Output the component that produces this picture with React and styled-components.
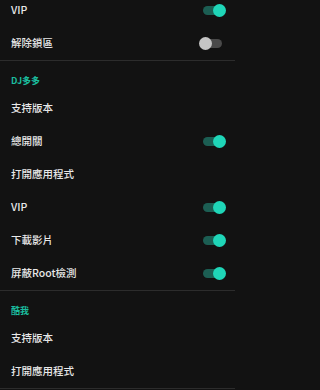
import React from 'react';
import styled, { createGlobalStyle } from 'styled-components';

const GlobalStyle = createGlobalStyle`
  html, body {
    margin: 0;
    padding: 0;
    background: #121212;
  }
  body {
    font-family: "Noto Sans CJK TC", "Noto Sans", sans-serif;
    overflow: hidden;
  }
`;

const Page = styled.div`
  width: 235px;
  height: 390px;
  background: #121212;
  overflow: hidden;
`;

const List = styled.div`
  margin-top: -6px;
  display: flex;
  flex-direction: column;
`;

const Row = styled.div`
  height: 33px;
  display: flex;
  align-items: center;
  justify-content: space-between;
  padding: 0 13px 0 11px;
  box-sizing: border-box;
`;

const Label = styled.span`
  color: #e8e8e8;
  font-size: 10.5px;
  font-weight: 500;
  line-height: 1;
`;

const Divider = styled.div`
  height: 1px;
  background: #2c2c2c;
`;

const SectionTitle = styled.div`
  height: 31px;
  box-sizing: border-box;
  padding: 15px 11px 0;
  color: #1bbd9e;
  font-size: 9px;
  font-weight: 700;
  line-height: 1;
`;

const Track = styled.div`
  position: relative;
  width: 19px;
  height: 9px;
  border-radius: 5px;
  background: ${p => (p.$on ? '#1c5e53' : '#4a4a4a')};
`;

const Thumb = styled.div`
  position: absolute;
  top: 50%;
  left: ${p => (p.$on ? '10px' : '-4px')};
  width: 13px;
  height: 13px;
  margin-top: -6.5px;
  border-radius: 50%;
  background: ${p => (p.$on ? '#1fd6b8' : '#c4c4c4')};
`;

const Switch = ({ on }) => (
  <Track $on={on}>
    <Thumb $on={on} />
  </Track>
);

const Item = ({ label, toggle }) => (
  <Row>
    <Label>{label}</Label>
    {toggle !== undefined && <Switch on={toggle} />}
  </Row>
);

const App = () => (
  <Page>
    <GlobalStyle />
    <List>
      <Item label="VIP" toggle={true} />
      <Item label="解除鎖區" toggle={false} />
      <Divider />
      <SectionTitle>DJ多多</SectionTitle>
      <Item label="支持版本" />
      <Item label="總開關" toggle={true} />
      <Item label="打開應用程式" />
      <Item label="VIP" toggle={true} />
      <Item label="下載影片" toggle={true} />
      <Item label="屏蔽Root檢測" toggle={true} />
      <Divider />
      <SectionTitle>酷我</SectionTitle>
      <Item label="支持版本" />
      <Item label="打開應用程式" />
      <Divider />
    </List>
  </Page>
);

export default App;
